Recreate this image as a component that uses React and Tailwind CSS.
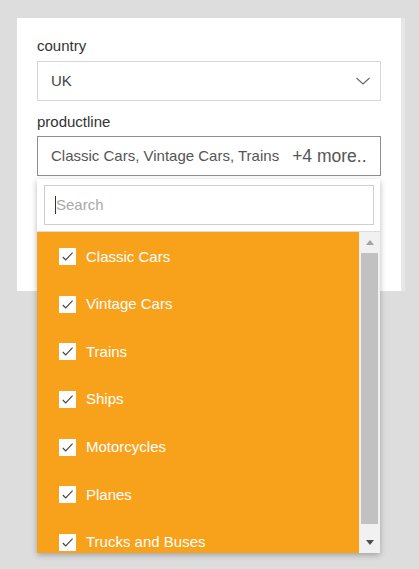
import React from 'react';

const options = ['Classic Cars', 'Vintage Cars', 'Trains', 'Ships', 'Motorcycles', 'Planes', 'Trucks and Buses'];

const CheckBox = () => (
  <span className="flex h-[17px] w-[17px] shrink-0 items-center justify-center bg-white">
    <svg width="17" height="17" viewBox="0 0 17 17" fill="none">
      <path d="M3.8 9 L6.7 12 L13.6 4.6" stroke="#444" strokeWidth="1.1" />
    </svg>
  </span>
);

const App = () => {
  return (
    <div
      className="h-[569px] w-full bg-[#dddddd] px-[17px] pt-[18px]"
      style={{ fontFamily: '"Liberation Sans", Arial, sans-serif' }}
    >
      <div className="relative h-[273px] w-[384px] bg-white px-5 pt-[18px] shadow-[4px_0_0_#e7e7e7]">
        {/* country */}
        <div className="text-[15px] leading-5 text-[#333]">country</div>
        <div className="mt-[5px] flex h-10 w-[344px] items-center justify-between border border-[#d6d6d6] pl-[13px] pr-[8px]">
          <span className="text-[15px] text-[#444]">UK</span>
          <svg width="16" height="10" viewBox="0 0 16 10" fill="none" className="mr-[1px]">
            <path d="M1.5 2 L8 8 L14.5 2" stroke="#666" strokeWidth="1.1" />
          </svg>
        </div>

        {/* productline */}
        <div className="mt-[11px] text-[15px] leading-5 text-[#333]">productline</div>
        <div className="relative mt-[4px]">
          <div className="flex h-10 w-[344px] items-center overflow-hidden whitespace-nowrap border border-[#8f8f8f] pl-[13px] text-[#555]">
            <span className="text-[15px]">Classic Cars, Vintage Cars, Trains</span>
            <span className="ml-[13px] text-[17.5px]">+4 more..</span>
          </div>

          {/* dropdown */}
          <div className="absolute left-0 top-full z-10 mt-[3px] w-[343px] bg-white shadow-[0_2px_6px_rgba(0,0,0,0.28)]">
            <div className="pl-[7px] pr-[6px] pt-[6px] pb-[6px]">
              <div className="flex h-10 items-center border border-[#cfcfcf] pl-[10px]">
                <span className="h-[18px] w-px bg-[#333]" />
                <span className="text-[15px] text-[#a8a8a8]">Search</span>
              </div>
            </div>
            <div className="flex h-[322px] border-t border-[#dcdcdc]">
              <div className="w-[322px] overflow-hidden bg-[#f8a11b] pt-px">
                {options.map((o) => (
                  <div key={o} className="flex h-[47.6px] items-center pl-[22px]">
                    <CheckBox />
                    <span className="ml-[10px] text-[15px] text-white">{o}</span>
                  </div>
                ))}
              </div>
              <div className="flex w-[21px] flex-col bg-[#f1f1f1] px-[2px]">
                <div className="flex h-[21px] items-center justify-center">
                  <svg width="8" height="5" viewBox="0 0 8 5">
                    <path d="M0 5 L4 0 L8 5 Z" fill="#a3a3a3" />
                  </svg>
                </div>
                <div className="h-[271px] bg-[#c1c1c1]" />
                <div className="flex-1" />
                <div className="flex h-[21px] items-center justify-center">
                  <svg width="8" height="5" viewBox="0 0 8 5">
                    <path d="M0 0 L8 0 L4 5 Z" fill="#505050" />
                  </svg>
                </div>
              </div>
            </div>
          </div>
        </div>
      </div>
    </div>
  );
};

export default App;
